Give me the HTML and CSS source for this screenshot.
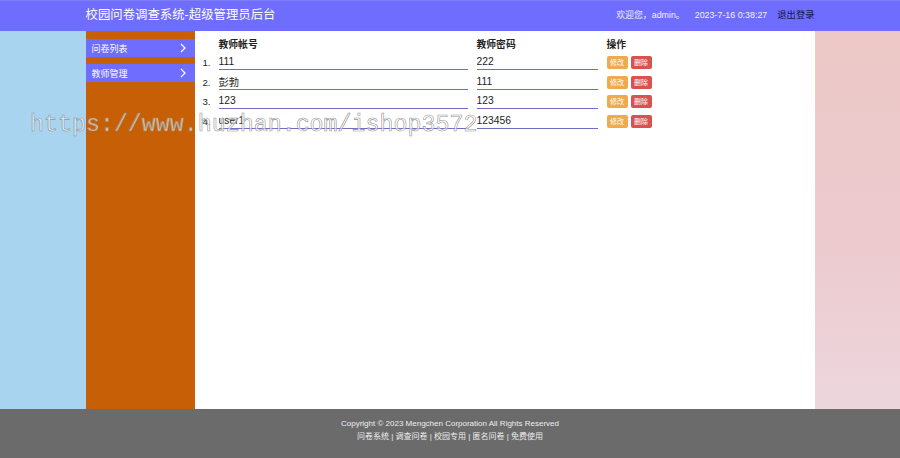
FILE: index.html
```html
<!DOCTYPE html>
<html lang="zh-CN">
<head>
<meta charset="utf-8">
<title>校园问卷调查系统-超级管理员后台</title>
<link rel="stylesheet" href="styles.css">
</head>
<body>
<header class="topbar">
  <div class="wrap topbar-inner">
    <h1 class="brand">校园问卷调查系统-超级管理员后台</h1>
    <div class="userbox">
      <span class="welcome">欢迎您，admin。</span>
      <span class="clock">2023-7-16 0:38:27</span>
      <a class="logout" href="#">退出登录</a>
    </div>
  </div>
</header>

<div class="wrap layout">
  <nav class="sidebar">
    <a class="menu-item" href="#"><span>问卷列表</span>
      <svg class="chev" viewBox="0 0 6 10" width="6" height="10"><path d="M1 1l4 4-4 4" fill="none" stroke="#fff" stroke-width="1.2"/></svg>
    </a>
    <a class="menu-item" href="#"><span>教师管理</span>
      <svg class="chev" viewBox="0 0 6 10" width="6" height="10"><path d="M1 1l4 4-4 4" fill="none" stroke="#fff" stroke-width="1.2"/></svg>
    </a>
  </nav>

  <main class="content">
    <div class="grid head">
      <span></span>
      <span class="th">教师帐号</span>
      <span class="th">教师密码</span>
      <span class="th">操作</span>
    </div>
    <div class="grid row">
      <span class="num">1.</span>
      <input class="field" value="111">
      <input class="field" value="222">
      <span class="ops"><button class="btn edit">修改</button><button class="btn del">删除</button></span>
    </div>
    <div class="grid row">
      <span class="num">2.</span>
      <input class="field" value="彭勃">
      <input class="field" value="111">
      <span class="ops"><button class="btn edit">修改</button><button class="btn del">删除</button></span>
    </div>
    <div class="grid row">
      <span class="num">3.</span>
      <input class="field" value="123">
      <input class="field" value="123">
      <span class="ops"><button class="btn edit">修改</button><button class="btn del">删除</button></span>
    </div>
    <div class="grid row">
      <span class="num">4.</span>
      <input class="field" value="user1">
      <input class="field" value="123456">
      <span class="ops"><button class="btn edit">修改</button><button class="btn del">删除</button></span>
    </div>
  </main>
</div>

<footer class="footer">
  <p>Copyright © 2023 Mengchen Corporation All Rights Reserved</p>
  <p>问卷系统 | 调查问卷 | 校园专用 | 匿名问卷 | 免费使用</p>
</footer>

<div class="watermark">https://www.huzhan.com/ishop3572</div>
</body>
</html>
```

FILE: styles.css
```css
* { box-sizing: border-box; }

html, body { height: 100%; }

body {
  margin: 0;
  font-family: "Liberation Sans", Arial, "Noto Sans CJK SC", sans-serif;
  color: #333;
  background:
    linear-gradient(to right, #a8d4f0 0, #a8d4f0 50%, transparent 50%),
    linear-gradient(to bottom, #ecc7c5 0%, #eccbcf 55%, #ecdae1 100%);
  position: relative;
  display: flex;
  flex-direction: column;
}

.wrap {
  width: 729px;
  margin: 0 auto;
}

/* top bar */
.topbar {
  height: 31px;
  background: #6e6dfd;
  border-top: 1px solid #7f7ff2;
}
.topbar-inner {
  height: 100%;
  display: flex;
  align-items: center;
  justify-content: space-between;
}
.brand {
  margin: 0;
  font-size: 12.4px;
  font-weight: normal;
  color: #fff;
  line-height: 1;
  padding-bottom: 1px;
}
.userbox {
  display: flex;
  align-items: center;
  gap: 10px;
  font-size: 8.9px;
  line-height: 1;
  padding-bottom: 1px;
}
.welcome, .clock { color: #f2f2ff; }
.logout { color: #15154a; text-decoration: none; font-size: 9.3px; }

/* middle area */
.layout {
  height: 378px;
  display: flex;
}
.sidebar {
  width: 109px;
  flex: none;
  background: #c65f06;
  padding-top: 8px;
  display: flex;
  flex-direction: column;
  gap: 7px;
}
.menu-item {
  height: 18px;
  background: #6e6dfd;
  color: #fff;
  text-decoration: none;
  font-size: 9px;
  display: flex;
  align-items: center;
  justify-content: space-between;
  padding: 0 9px 0 6px;
}
.chev { display: block; }

.content {
  flex: 1;
  background: #fff;
  padding: 6px 0 0 8px;
}
.grid {
  display: grid;
  grid-template-columns: 16px 258px 130px auto;
  align-items: center;
}
.head { height: 14px; margin-bottom: 4px; }
.th { font-size: 9.8px; font-weight: bold; color: #222; }
.row { height: 15px; margin-bottom: 4.67px; }
.num { font-size: 9.6px; color: #222; }
.field {
  height: 15px;
  border: 0;
  border-bottom: 1px solid #6e6ec4;
  padding: 0 0 1px 0;
  margin: 0;
  font: 10.3px "Liberation Sans", Arial, "Noto Sans CJK SC", sans-serif;
  color: #222;
  background: transparent;
  outline: none;
}
.row .field:nth-child(2) { width: 249px; }
.row .field:nth-child(3) { width: 121px; }
.ops { display: flex; gap: 3px; }
.btn {
  height: 13px;
  padding: 0 3.5px;
  border: 0;
  border-radius: 2px;
  font: 7px "Liberation Sans", Arial, "Noto Sans CJK SC", sans-serif;
  color: #fff;
  line-height: 13px;
}
.edit { background: #efaa4c; }
.del { background: #d8534f; }

/* footer */
.footer {
  flex: 1;
  background: #6b6b6b;
  color: #eee;
  font-size: 8px;
  line-height: 13px;
  text-align: center;
  padding-top: 8px;
}
.footer p { margin: 0; }

/* outlined watermark over the page */
.watermark {
  position: absolute;
  left: 30px;
  top: 114px;
  font-family: "Liberation Mono", "Courier New", monospace;
  font-size: 23.3px;
  line-height: 1;
  color: rgba(255, 255, 255, 0.6);
  -webkit-text-stroke: 0.6px rgba(140, 140, 140, 0.95);
  pointer-events: none;
  white-space: nowrap;
}
```
